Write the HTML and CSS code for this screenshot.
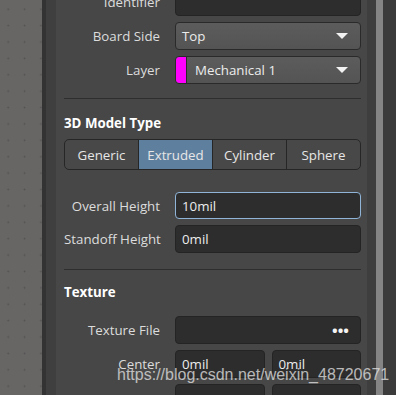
FILE: index.html
```html
<!DOCTYPE html>
<html>
<head>
<meta charset="utf-8">
<link rel="stylesheet" href="styles.css">
</head>
<body>
<div class="app">
  <div class="canvas"></div>
  <div class="edge1"></div>
  <div class="edge2"></div>
  <div class="panel">
    <div class="content">
      <div class="row"><div class="label">Identifier</div><div class="input"></div></div>
      <div class="row"><div class="label">Board Side</div><div class="select"><span class="val">Top</span><span class="caret"></span></div></div>
      <div class="row"><div class="label">Layer</div><div class="select layer"><span class="swatch"></span><span class="val">Mechanical 1</span><span class="caret"></span></div></div>
      <hr class="divider">
      <div class="heading">3D Model Type</div>
      <div class="seg">
        <div class="segitem">Generic</div>
        <div class="segitem active">Extruded</div>
        <div class="segitem">Cylinder</div>
        <div class="segitem">Sphere</div>
      </div>
      <div class="row r1"><div class="label">Overall Height</div><div class="input focus">10mil</div></div>
      <div class="row"><div class="label">Standoff Height</div><div class="input">0mil</div></div>
      <hr class="divider d2">
      <div class="heading h2">Texture</div>
      <div class="row r2"><div class="label">Texture File</div><div class="input dots"><span>•••</span></div></div>
      <div class="row"><div class="label">Center</div><div class="pair"><div class="input">0mil</div><div class="input">0mil</div></div></div>
      <div class="row"><div class="label"></div><div class="pair"><div class="input"></div><div class="input"></div></div></div>
    </div>
  </div>
  <div class="side1"></div>
  <div class="scroll"></div>
  <div class="side2"></div>
  <div class="watermark">https://blog.csdn.net/weixin_48720671</div>
</div>
</body>
</html>
```
FILE: styles.css
```css
html, body { margin: 0; padding: 0; }
body { width: 396px; height: 395px; overflow: hidden; background: #464646; font-family: "Open Sans", "Noto Sans", sans-serif; font-size: 13.3px; }
.app { display: flex; height: 395px; position: relative; overflow: hidden; }
.canvas { width: 42px; background-color: #686665;
  background-image: radial-gradient(circle, #535252 0.8px, transparent 1.1px);
  background-size: 16.4px 16.4px; background-position: 0px 1px; }
.edge1 { width: 4px; background: #333333; }
.edge2 { width: 10px; background: #3f3f3f; }
.panel { width: 311px; background: #474747; overflow: hidden; }
.side1 { width: 9px; background: #3e3e3e; }
.scroll { width: 7px; background: #858585; }
.side2 { flex: 1; background: #3b3b3b; }
.content { margin-top: -12px; padding: 0 6px 0 8px; display: flex; flex-direction: column; }
.row { display: flex; align-items: center; gap: 15px; margin-bottom: 6px; }
.label { width: 96px; text-align: right; color: #dcdcdc; flex: none; white-space: nowrap; }
.input { flex: 1; box-sizing: border-box; height: 28px; background: #2d2d2d; border: 1px solid #242424; border-radius: 4px; color: #ececec; padding: 0 6px; display: flex; align-items: center; }
.input.focus { border-color: #8fb4d8; height: 27px; }
.select { flex: 1; height: 28px; box-sizing: border-box; background: linear-gradient(#5c5c5c, #545454); border: 1px solid #2a2a2a; border-radius: 4px; color: #ececec; display: flex; align-items: center; padding: 0 12px 0 6px; }
.select .val { flex: 1; }
.caret { width: 0; height: 0; border-left: 6px solid transparent; border-right: 6px solid transparent; border-top: 6px solid #f2f2f2; }
.layer { padding-left: 0; overflow: hidden; }
.swatch { width: 10px; height: 26px; background: #ff00ff; border-right: 1px solid #2a2a2a; border-radius: 3px 0 0 3px; margin-right: 8px; }
.divider { border: 0; border-top: 1px solid #2e2e2e; margin: 8px 0 0 0; height: 0; }
.heading { color: #ffffff; font-weight: bold; margin-top: 15px; height: 18px; line-height: 18px; }
.seg { display: flex; margin-top: 7px; height: 31px; box-sizing: border-box; border: 1px solid #262626; border-radius: 5px; overflow: hidden; background: #484848; }
.segitem { flex: 1; display: flex; align-items: center; justify-content: center; color: #e6e6e6; border-left: 1px solid #262626; }
.segitem:first-child { border-left: 0; }
.segitem.active { background: #5f7f9f; }
.r1 { margin-top: 22px; }
.d2 { margin-top: 10px; }
.h2 { margin-top: 13px; }
.r2 { margin-top: 15px; }
.dots { justify-content: flex-end; padding-right: 11px; font-size: 15px; font-weight: bold; letter-spacing: 0px; color: #f4f4f4; }
.pair { flex: 1; display: flex; gap: 7px; }
.pair .input { flex: 1; }
.watermark { position: absolute; left: 117px; top: 366px; font-family: "Liberation Sans", Arial, sans-serif; font-size: 16px; color: rgba(225,225,225,0.78); white-space: nowrap; }
```
